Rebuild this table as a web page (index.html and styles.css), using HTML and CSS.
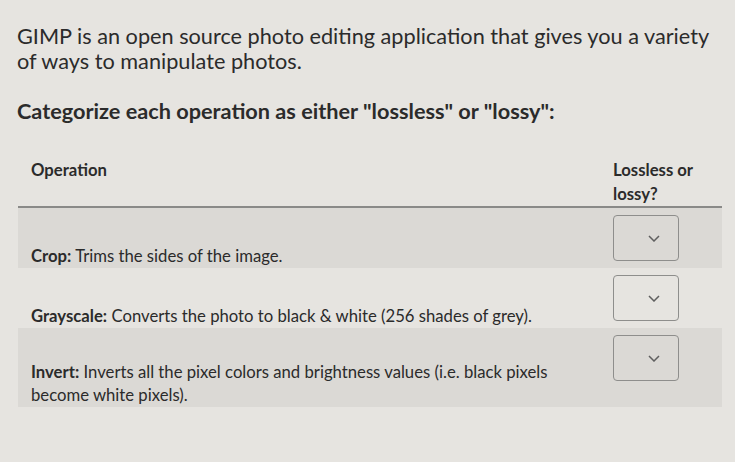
FILE: index.html
```html
<!DOCTYPE html>
<html lang="en">
<head>
<meta charset="utf-8">
<title>GIMP operations</title>
<link rel="stylesheet" href="styles.css">
</head>
<body>
<main class="page">
  <p class="intro">GIMP is an open source photo editing application that gives you a variety of ways to manipulate photos.</p>
  <p class="prompt">Categorize each operation as either "lossless" or "lossy":</p>
  <table class="ops">
    <thead>
      <tr>
        <th class="col-op">Operation</th>
        <th class="col-sel">Lossless or lossy?</th>
      </tr>
    </thead>
    <tbody>
      <tr class="shaded">
        <td class="desc"><b>Crop:</b> Trims the sides of the image.</td>
        <td class="pick"><span class="select"><svg class="chev" viewBox="0 0 12 7" width="12" height="7"><path d="M1 1 L6 6 L11 1" fill="none" stroke="#5f5f5f" stroke-width="1.5"/></svg></span></td>
      </tr>
      <tr>
        <td class="desc"><b>Grayscale:</b> Converts the photo to black &amp; white (256 shades of grey).</td>
        <td class="pick"><span class="select"><svg class="chev" viewBox="0 0 12 7" width="12" height="7"><path d="M1 1 L6 6 L11 1" fill="none" stroke="#5f5f5f" stroke-width="1.5"/></svg></span></td>
      </tr>
      <tr class="shaded">
        <td class="desc"><b>Invert:</b> Inverts all the pixel colors and brightness values (i.e. black pixels become white pixels).</td>
        <td class="pick"><span class="select"><svg class="chev" viewBox="0 0 12 7" width="12" height="7"><path d="M1 1 L6 6 L11 1" fill="none" stroke="#5f5f5f" stroke-width="1.5"/></svg></span></td>
      </tr>
    </tbody>
  </table>
</main>
</body>
</html>
```

FILE: styles.css
```css
html, body {
  margin: 0;
  padding: 0;
  background: #e6e4e0;
}

.page {
  padding: 24px 13px 0 17px;
  font-family: Lato, "Open Sans", sans-serif;
  color: #2b2b2b;
}

.intro {
  margin: 0;
  font-size: 21.7px;
  line-height: 25px;
}

.prompt {
  margin: 25px 0 0 0;
  font-size: 21.7px;
  line-height: 25px;
  font-weight: bold;
}

.ops {
  margin: 34px 0 0 1px;
  width: 704px;
  border-collapse: collapse;
  font-size: 16.7px;
}

.ops th {
  font-weight: bold;
  text-align: left;
  vertical-align: top;
  line-height: 24px;
  padding: 0;
  border-bottom: 2px solid #8a8a88;
}

.ops th.col-op {
  padding-left: 13px;
}

.ops th.col-sel {
  width: 89px;
  padding-right: 20px;
}

.ops td {
  padding: 0;
}

.ops tr.shaded td {
  background: #dbd9d5;
}

.ops td.desc {
  vertical-align: bottom;
  padding: 33px 40px 0 13px;
  line-height: 23px;
}

.ops td.pick {
  vertical-align: top;
  padding: 7px 0 7px 0;
}

.select {
  display: flex;
  justify-content: flex-end;
  align-items: center;
  box-sizing: border-box;
  width: 66px;
  height: 46px;
  padding-right: 18px;
  border: 1.5px solid #8e8e8c;
  border-radius: 4px;
}

.chev {
  display: block;
}
```
